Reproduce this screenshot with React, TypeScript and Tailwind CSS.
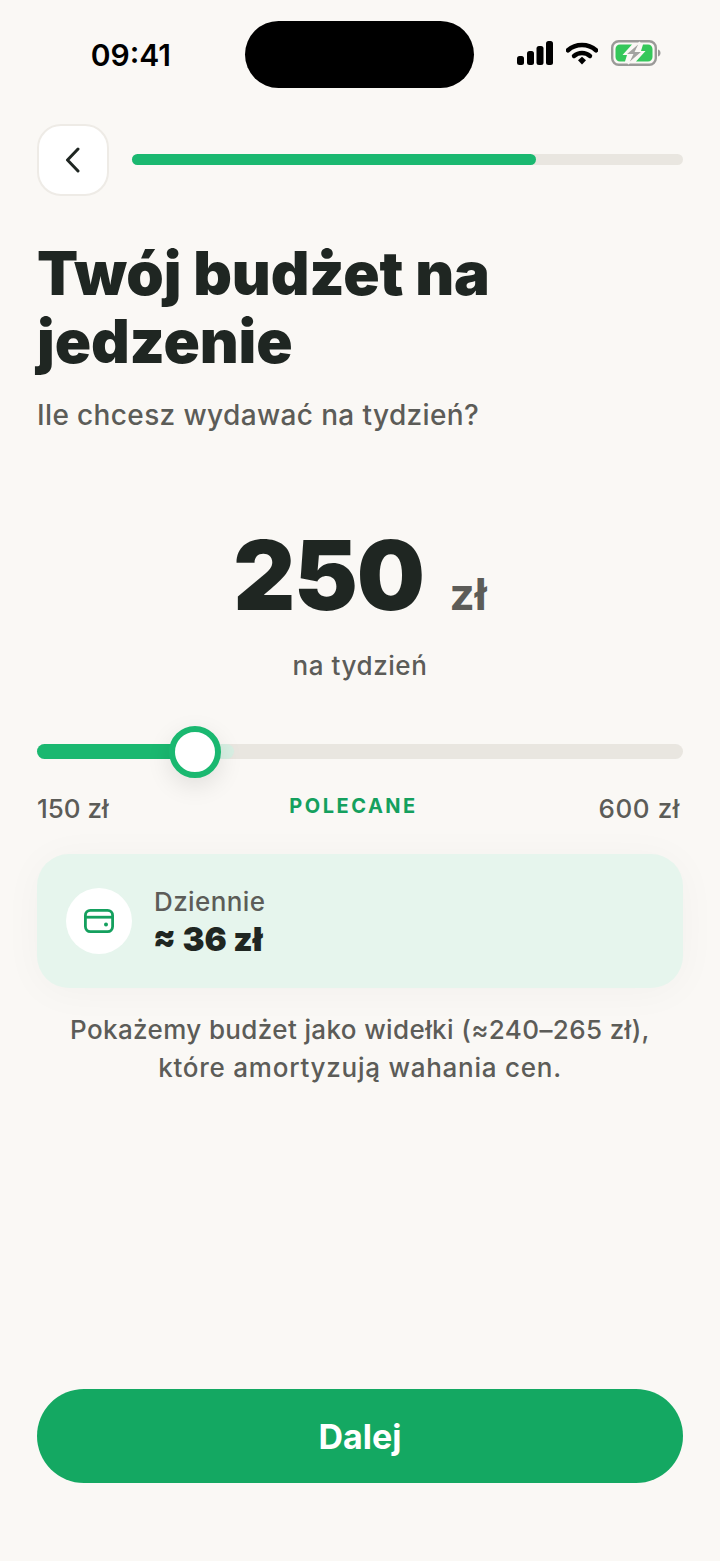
const font = "[font-family:Inter,'Liberation_Sans',sans-serif]";

const SignalIcon = () => (
  <svg width="36" height="24" viewBox="0 0 36 24" fill="#000">
    <rect x="0" y="15" width="7" height="9" rx="2.5" />
    <rect x="10" y="10" width="7" height="14" rx="2.5" />
    <rect x="19.5" y="5" width="7" height="19" rx="2.5" />
    <rect x="29" y="0" width="7" height="24" rx="2.5" />
  </svg>
);

const WifiIcon = () => (
  <svg width="32" height="24" viewBox="0 0 32 24" fill="none" stroke="#000">
    <path d="M2 9.2C9.8 2.2 22.2 2.2 30 9.2" strokeWidth="4.6" strokeLinecap="round" />
    <path d="M8 15C12.6 11 19.4 11 24 15" strokeWidth="4.4" strokeLinecap="round" />
    <path d="M12 19.2L16 15.8L20 19.2L16 23.4Z" fill="#000" stroke="none" />
  </svg>
);

const BatteryIcon = () => (
  <svg width="50" height="26" viewBox="0 0 50 26" fill="none">
    <rect x="1.2" y="1.2" width="43.6" height="23.6" rx="6.5" stroke="#9a9a98" strokeWidth="2.4" />
    <path d="M47 9.5C48.6 10 49.5 11.3 49.5 13C49.5 14.7 48.6 16 47 16.5Z" fill="#9a9a98" />
    <path d="M9 4.5H21L11.5 15H16L14 21.5H9C6.5 21.5 4.5 19.5 4.5 17V9C4.5 6.5 6.5 4.5 9 4.5Z" fill="#34c75a" />
    <path d="M37 4.5C39.5 4.5 41.5 6.5 41.5 9V17C41.5 19.5 39.5 21.5 37 21.5H25L34.5 11H30L32 4.5Z" fill="#34c75a" />
    <path d="M29 2L14.5 14.5H21.5L17 24L31.5 11.5H24.5Z" fill="#a3a3a1" stroke="#faf8f5" strokeWidth="1.2" />
  </svg>
);

const WalletIcon = () => (
  <svg width="30" height="24" viewBox="0 0 30 24" fill="none" stroke="#14a05e" strokeWidth="2.8">
    <rect x="1.4" y="1.4" width="27.2" height="21.2" rx="5" />
    <path d="M1.4 8.2H28.6" />
    <circle cx="22" cy="15.5" r="2" fill="#14a05e" stroke="none" />
  </svg>
);

export default function App() {
  return (
    <div className={`${font} flex h-[1561px] w-[720px] flex-col overflow-hidden bg-[#faf8f5] px-[37px] text-[#1f2622]`}>
      {/* status bar */}
      <div className="-mx-[37px] mt-[21px] flex h-[67px] shrink-0 items-center">
        <div className="flex w-[245px] justify-end pr-[74px] text-[30px] font-semibold leading-none text-black">
          09:41
        </div>
        <div className="h-[67px] w-[229px] rounded-[34px] bg-black" />
        <div className="mb-[3px] ml-[43px] flex items-center gap-[13px]">
          <SignalIcon />
          <WifiIcon />
          <BatteryIcon />
        </div>
      </div>

      {/* back + progress */}
      <div className="mt-[36px] flex items-center gap-[23px]">
        <button className="flex h-[72px] w-[72px] shrink-0 items-center justify-center rounded-[24px] border-2 border-[#eeebe6] bg-white">
          <svg width="18" height="26" viewBox="0 0 18 26" fill="none" stroke="#1f2622" strokeWidth="3" strokeLinecap="round" strokeLinejoin="round">
            <path d="M14 2L3.5 13L14 24" />
          </svg>
        </button>
        <div className="mb-[1px] h-[11px] flex-1 rounded-full bg-[#e9e6e0]">
          <div className="h-full w-[73.4%] rounded-full bg-[#1ab870]" />
        </div>
      </div>

      <h1 className="mt-[43px] text-[60px] font-black leading-[68px] -tracking-[0.1px]">
        Twój budżet na
        <br />
        jedzenie
      </h1>
      <p className="mt-[21px] text-[28px] font-medium leading-[38px] tracking-[0.37px] text-[#5c5c58]">
        Ile chcesz wydawać na tydzień?
      </p>

      {/* amount */}
      <div className="mt-[85px] flex items-baseline justify-center">
        <span className="text-[96px] font-black leading-[112px] -tracking-[1.3px]">250</span>
        <span className="ml-[26px] text-[44px] font-bold leading-none text-[#5c5c58]">zł</span>
      </div>
      <p className="mt-[17px] text-center text-[26px] font-medium leading-[36px] tracking-[0.55px] text-[#5c5c58]">
        na tydzień
      </p>

      {/* slider */}
      <div className="relative mt-[60px] h-[15px] rounded-full bg-[#e9e6e0]">
        <div className="absolute left-0 top-0 h-full w-[197px] rounded-full bg-[#d8efe3]" />
        <div className="absolute left-0 top-0 h-full w-[158px] rounded-full bg-[#1ab870]" />
        <div className="absolute left-[132px] top-[-18px] h-[52px] w-[52px] rounded-full border-[6px] border-[#1ab870] bg-white shadow-[0_8px_24px_rgba(0,0,0,0.1)]" />
      </div>
      <div className="mt-[32px] flex items-start justify-between pr-[3px] text-[26px] font-medium leading-[36px] text-[#5c5c58]">
        <span>150 zł</span>
        <span className="-translate-y-[3px] text-[20px] font-bold tracking-[2.5px] text-[#14a05e]">POLECANE</span>
        <span className="tracking-[0.6px]">600 zł</span>
      </div>

      {/* daily card */}
      <div className="mt-[27px] flex h-[134px] items-center gap-[22px] rounded-[32px] bg-[#e6f5ed] pl-[29px] shadow-[0_4px_40px_rgba(0,0,0,0.035)]">
        <div className="flex h-[66px] w-[66px] items-center justify-center rounded-full bg-white">
          <WalletIcon />
        </div>
        <div>
          <p className="text-[26px] font-medium leading-[36px] tracking-[0.4px] text-[#5c5c58]">Dziennie</p>
          <p className="-ml-[1px] -mt-[1px] text-[33px] font-black leading-[40px]">≈ 36 zł</p>
        </div>
      </div>

      <p className="mt-[23px] text-center text-[26px] font-medium leading-[38px] tracking-[0.37px] text-[#5c5c58]">
        Pokażemy budżet jako widełki (≈240–265 zł),
        <br />
        <span className="tracking-[0.75px]">które amortyzują wahania cen.</span>
      </p>

      <button className="mb-[78px] mt-auto h-[94px] shrink-0 rounded-[47px] bg-[#14a862] text-[34px] font-bold text-white">
        Dalej
      </button>
    </div>
  );
}
